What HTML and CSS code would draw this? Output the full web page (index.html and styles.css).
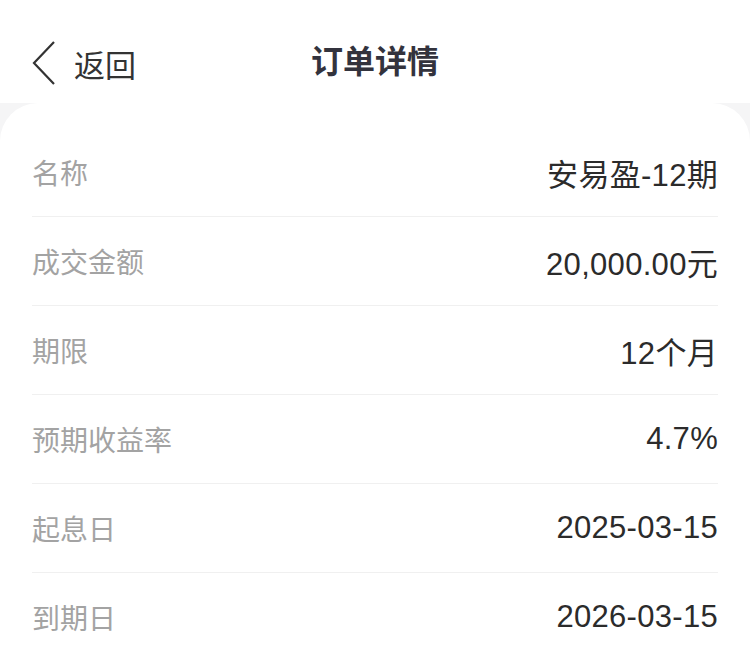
FILE: index.html
```html
<!DOCTYPE html>
<html>
<head>
<meta charset="utf-8">
<title>订单详情</title>
<link rel="stylesheet" href="styles.css">
</head>
<body>
<div id="Page">
  <div class="header">
    <div class="back">
      <svg class="backicon" width="26" height="46" viewBox="0 0 26 46">
        <polyline points="23,2 3,23 23,44" fill="none" stroke="#333" stroke-width="2.2" stroke-linejoin="miter" />
      </svg>
      <span class="backtext">返回</span>
    </div>
    <h1 class="title">订单详情</h1>
  </div>

  <div class="card">
    <div class="row">
      <span class="label">名称</span>
      <span class="value">安易盈-12期</span>
    </div>
    <div class="row">
      <span class="label">成交金额</span>
      <span class="value">20,000.00元</span>
    </div>
    <div class="row">
      <span class="label">期限</span>
      <span class="value">12个月</span>
    </div>
    <div class="row">
      <span class="label">预期收益率</span>
      <span class="value">4.7%</span>
    </div>
    <div class="row">
      <span class="label">起息日</span>
      <span class="value">2025-03-15</span>
    </div>
    <div class="row">
      <span class="label">到期日</span>
      <span class="value">2026-03-15</span>
    </div>
  </div>
</div>
</body>
</html>
```

FILE: styles.css
```css
html, body
{
  margin: 0;
  padding: 0;
  height: 100%;
  font-family: "Liberation Sans", "Noto Sans CJK SC", sans-serif;
  background-color: #f5f5f6;
}

#Page
{
  min-height: 100%;
}

.header
{
  position: relative;
  height: 103px;
  box-sizing: border-box;
  padding-top: 21px;
  display: flex;
  align-items: center;
  justify-content: center;
  background-color: #ffffff;
}

.back
{
  position: absolute;
  left: 31px;
  top: 40px;
  display: flex;
  align-items: center;
}

.backicon
{
  display: block;
}

.backtext
{
  margin-left: 17px;
  font-size: 31px;
  color: #333333;
}

.title
{
  margin: 0;
  height: 82px;
  line-height: 82px;
  font-size: 32px;
  font-weight: bold;
  color: #33333d;
}

.card
{
  background-color: #ffffff;
  border-radius: 38px 38px 0 0;
  padding: 25px 32px 0 32px;
}

.row
{
  display: flex;
  align-items: center;
  justify-content: space-between;
  height: 88px;
  border-bottom: 1px solid #f0f0f0;
}

.row:last-child
{
  border-bottom: none;
}

.label
{
  font-size: 28px;
  color: #a3a3a3;
}

.value
{
  font-size: 31px;
  letter-spacing: 0.3px;
  color: #2b2b2b;
}
```
